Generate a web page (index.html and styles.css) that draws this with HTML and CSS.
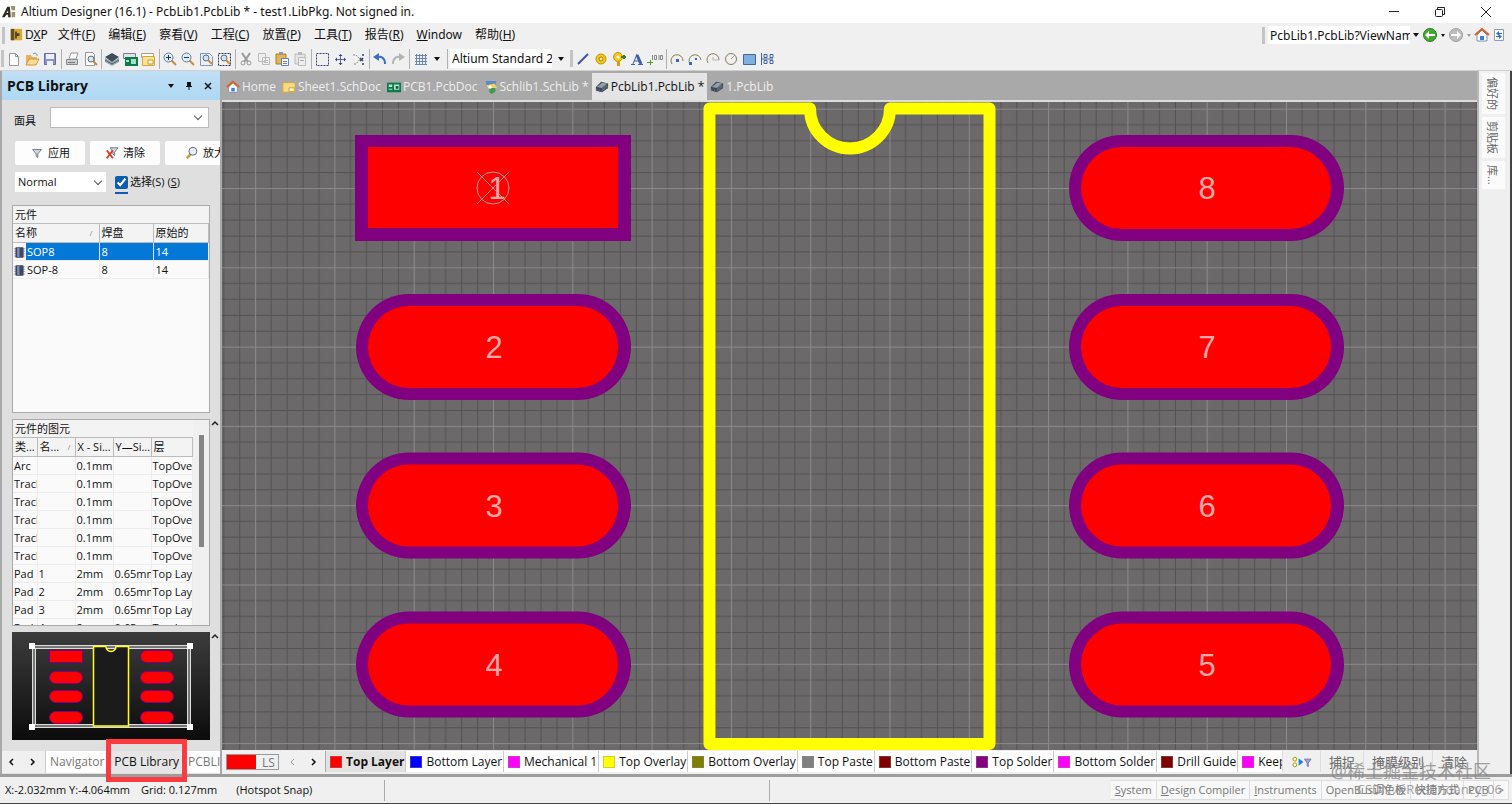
FILE: index.html
```html
<!DOCTYPE html>
<html lang="zh-CN">
<head>
    <title>Altium Designer (16.1)</title>
    <meta charset="UTF-8">
    <meta name="viewport" content="width=device-width, initial-scale=1.0">
    <link rel="stylesheet" href="styles.css">
</head>

<body>
    <!-- shared icons -->
    <svg class="defs" width="0" height="0">
        <symbol id="i-zoom" viewBox="0 0 16 16"><path d="M9 9l5 5" stroke="#c98a3a" stroke-width="2"/><circle cx="6.500" cy="6.500" r="4.500" fill="#dcecf8" stroke="#6c7c8c"/></symbol>
        <symbol id="i-chip" viewBox="0 0 16 16"><path d="M1 8l6-6 8 2v5l-7 5-7-2z" fill="#3d4751"/><path d="M2 8l6-5 6 1-6 5z" fill="#8e9fb0"/><path d="M2 10v3M5 11v3M8 11v3M11 9v3M14 7v3" stroke="#66717d"/><path d="M8 9l6-5v4l-6 5z" fill="#59656f"/></symbol>
        <symbol id="i-board" viewBox="0 0 16 16"><path d="M0 3h16v11H0z" fill="#0b7a4d"/><path d="M2 5h4v3H2zM2 10h4v1H2zM8 5h6v6H8z" fill="#b9e2cd"/><path d="M10 7h3v3h-3z" fill="#075536"/></symbol>
        <symbol id="i-sheet" viewBox="0 0 16 16"><path d="M1 3h14v11H1z" fill="#f6dc7c" stroke="#d0a640"/><path d="M8 9h6v4H8z" fill="#fffbe6" stroke="#c89c30"/></symbol>
        <symbol id="i-home" viewBox="0 0 16 16"><path d="M3 8v6h10V8L8 3z" fill="#fff" stroke="#8290a8"/><path d="M1 8l7-6 7 6" fill="none" stroke="#d9602a" stroke-width="2"/><path d="M6 9h4v4H6z" fill="#3d7fd6"/></symbol>
        <symbol id="i-funnel" viewBox="0 0 16 16"><path d="M3 4h10l-4 5v4l-2-1V9z" fill="#cfd6dd" stroke="#65717d"/></symbol>
        <symbol id="i-part" viewBox="0 0 16 16"><path d="M1 4h14M1 7h14M1 10h14M1 13h14" stroke="#8d93a6"/><rect x="3" y="2" width="10" height="13" rx="1" fill="#3e4763"/><path d="M5 3h3v11H5z" fill="#7f8bb0"/></symbol>
    </svg>

    <header class="titlebar">
        <svg class="icon" viewBox="0 0 16 16"><path d="M0 14L6 2h3l1 12H7v-3H5l-2 3z" fill="#2d2b22"/><path d="M10 1h5v5h-4zM11 8h4v6h-4z" fill="#9a9468"/><path d="M5 9l2-3v3z" fill="#fff"/></svg>
        <h1>Altium Designer (16.1) - PcbLib1.PcbLib * - test1.LibPkg. Not signed in.</h1>
        <div class="window-buttons">
            <button aria-label="Minimize"><svg class="icon" viewBox="0 0 16 16"><path d="M3 7.500h10" stroke="#222"/></svg></button>
            <button aria-label="Restore"><svg class="icon" viewBox="0 0 16 16"><rect x="3.500" y="5.500" width="7" height="7" rx="1" fill="none" stroke="#222"/><path d="M5.500 5V3.500h7v7H11" fill="none" stroke="#222"/></svg></button>
            <button aria-label="Close"><svg class="icon" viewBox="0 0 16 16"><path d="M3 3l10 10M13 3L3 13" stroke="#222"/></svg></button>
        </div>
    </header>

    <nav class="menubar">
        <span class="grip"></span>
        <button class="dxp"><svg class="icon" viewBox="0 0 16 16"><path d="M2 1h13v13H2z" fill="#d9aa32"/><path d="M2 1h4v13H2z" fill="#635023"/><path d="M7 4h2v8H7zM9 6h3v3H9z" fill="#4a4226"/></svg><span>D<u>X</u>P</span></button>
        <button>文件(<u>F</u>)</button>
        <button>编辑(<u>E</u>)</button>
        <button>察看(<u>V</u>)</button>
        <button>工程(<u>C</u>)</button>
        <button>放置(<u>P</u>)</button>
        <button>工具(<u>T</u>)</button>
        <button>报告(<u>R</u>)</button>
        <button><u>W</u>indow</button>
        <button>帮助(<u>H</u>)</button>
        <div class="address">
            <span class="grip"></span>
            <input type="text" value="PcbLib1.PcbLib?ViewName=Main" aria-label="Address">
            <i class="caret"></i>
            <svg class="icon" viewBox="0 0 16 16"><circle cx="8" cy="8" r="6.500" fill="#43a832" stroke="#2c7a21"/><path d="M3 8l4-4v3h6v2H7v3z" fill="#fff"/></svg>
            <i class="caret small"></i>
            <svg class="icon" viewBox="0 0 16 16"><circle cx="8" cy="8" r="6.500" fill="#bdbdbd" stroke="#a0a0a0"/><path d="M13 8L9 4v3H3v2h6v3z" fill="#fff"/></svg>
            <i class="caret small off"></i>
            <svg class="icon"><use href="#i-home"/></svg>
            <svg class="icon" viewBox="0 0 16 16"><path d="M3.500 2.500h9v11h-9z" fill="#fff" stroke="#8b9cb8"/><path d="M7 6.500h4M5 9.500h4" stroke="#2c74cf"/><path d="M8 4v5L5 6.500zM8 7v5l3-2.500z" fill="#2c74cf"/></svg>
        </div>
    </nav>

    <div class="toolbar">
        <span class="grip"></span>
        <button aria-label="New"><svg class="icon" viewBox="0 0 16 16"><path d="M3.500 2.500h6l3 3v9h-9z" fill="#fff" stroke="#9a9a9a"/><path d="M9.500 2.500v3h3" fill="none" stroke="#9a9a9a"/></svg></button>
        <button aria-label="Open"><svg class="icon" viewBox="0 0 16 16"><path d="M2 4h5l1 2h5v7H2z" fill="#e8b458"/><path d="M2 14l3-6h10l-3 6z" fill="#fbdc94" stroke="#cf9640"/><path d="M9 3c3-2 4 0 4 2" fill="none" stroke="#6d93c5"/></svg></button>
        <button aria-label="Save"><svg class="icon" viewBox="0 0 16 16"><path d="M2.500 2.500h11v11h-11z" fill="#8d93c9" stroke="#666ba5"/><path d="M4 3h8v5H4zM5 10h6v4H5z" fill="#eceef8"/></svg></button>
        <span class="sep"></span>
        <button aria-label="Print"><svg class="icon" viewBox="0 0 16 16"><path d="M2.500 8.500h11v5h-11z" fill="#c9ccd0" stroke="#888"/><path d="M5 8l2-6h7l-2 6z" fill="#fff" stroke="#999"/><path d="M4 11.500h7" stroke="#777"/></svg></button>
        <button aria-label="Preview"><svg class="icon" viewBox="0 0 16 16"><path d="M3.500 1.500h7l2 2v11h-9z" fill="#fff" stroke="#999"/><circle cx="9" cy="8" r="3" fill="#d5e8f5" stroke="#667"/><path d="M11 10l4 4" stroke="#c98a3a" stroke-width="2"/></svg></button>
        <span class="sep"></span>
        <button aria-label="Devices"><svg class="icon" viewBox="0 0 16 16"><path d="M1 7v4l7 4 7-4V7l-7 4z" fill="#9aa9b4"/><path d="M1 9l7 4 7-4" fill="none" stroke="#4d5c68"/><path d="M1 6l7-4 7 4-7 5z" fill="#3d4e5b"/></svg></button>
        <button aria-label="PCB"><svg class="icon" viewBox="0 0 16 16"><path d="M1.500 2.500h12v5h-12z" fill="#dce7e2" stroke="#879"/><path d="M3 6h13v9H3z" fill="#0b7a4d"/><path d="M9 8h5v5H9zM4 9h3v2H4z" fill="#aedcc6"/></svg></button>
        <button aria-label="Sheet"><svg class="icon" viewBox="0 0 16 16"><path d="M1.500 2.500h12v4h-12z" fill="#fff" stroke="#a5a08a"/><path d="M2.500 5.500h12v9h-12z" fill="#fae391" stroke="#d0a640"/><path d="M8 9h5v4H8z" fill="#fffbe6" stroke="#c89c30"/></svg></button>
        <span class="sep"></span>
        <button aria-label="Zoom in"><svg class="icon" viewBox="0 0 16 16"><use href="#i-zoom"/><path d="M4 6.500h5M6.500 4v5" stroke="#234"/></svg></button>
        <button aria-label="Zoom out"><svg class="icon" viewBox="0 0 16 16"><use href="#i-zoom"/><path d="M4 6.500h5" stroke="#234"/></svg></button>
        <button aria-label="Fit document"><svg class="icon" viewBox="0 0 16 16"><path d="M2.500 2.500h9l3 3v9h-12z" fill="#e7f0fb" stroke="#8296b8"/><circle cx="8" cy="7" r="3" fill="#cfe3f5" stroke="#5d6f85"/><path d="M10 9l4 4" stroke="#c98a3a" stroke-width="2"/></svg></button>
        <button aria-label="Zoom area"><svg class="icon" viewBox="0 0 16 16"><path d="M2.500 2.500h12v12h-12z" fill="none" stroke="#26355e" stroke-dasharray="2 1"/><circle cx="8" cy="7" r="3" fill="#cfe3f5" stroke="#5d6f85"/><path d="M10 9l4 4" stroke="#c98a3a" stroke-width="2"/></svg></button>
        <span class="sep"></span>
        <button aria-label="Cut"><svg class="icon" viewBox="0 0 16 16"><path d="M4 2l6 9M12 2L6 11" stroke="#999" stroke-width="2"/><circle cx="5" cy="12" r="2" fill="none" stroke="#999"/><circle cx="11" cy="12" r="2" fill="none" stroke="#999"/></svg></button>
        <button aria-label="Copy"><svg class="icon" viewBox="0 0 16 16"><path d="M2.500 2.500h7v8h-7zM6.500 6.500h7v7h-7z" fill="#eee" stroke="#bbb"/><path d="M8 9.500h4M8 11.500h4" stroke="#bbb"/></svg></button>
        <button aria-label="Paste"><svg class="icon" viewBox="0 0 16 16"><path d="M2 3h10v10H2z" fill="#e2b64e" stroke="#a8802c"/><path d="M5 1h4v3H5z" fill="#999"/><path d="M7.500 7.500h7v7h-7z" fill="#fff" stroke="#5f83bd"/><path d="M9 10.500h4M9 12.500h4" stroke="#5f83bd"/></svg></button>
        <button aria-label="Rubber stamp"><svg class="icon" viewBox="0 0 16 16"><path d="M3 3h10v10H3z" fill="#e4e4e4" stroke="#bbb"/><path d="M6 1h4v3H6z" fill="#bbb"/><path d="M6.500 6.500h7v8h-7z" fill="#eee" stroke="#bbb"/><path d="M8 9.500h4" stroke="#aaa"/></svg></button>
        <span class="sep"></span>
        <button aria-label="Select"><svg class="icon" viewBox="0 0 16 16"><path d="M2.500 2.500h12v12h-12z" fill="none" stroke="#34407c" stroke-dasharray="2 1"/></svg></button>
        <button aria-label="Move"><svg class="icon" viewBox="0 0 16 16"><path d="M8.500 4v10M4 8.500h9" stroke="#5a649a"/><path d="M8.500 3l2 2h-4zM8.500 14l2-2h-4zM3 8.500l2-2v4zM14 8.500l-2-2v4z" fill="#34407c"/></svg></button>
        <button aria-label="Deselect"><svg class="icon" viewBox="0 0 16 16"><path d="M3 4h3l4 4-4 5H3" fill="none" stroke="#888" stroke-dasharray="2 1"/><path d="M10 7l3 3M13 7l-3 3M13 3v2M13 12v2" stroke="#34407c" stroke-width="1.500"/></svg></button>
        <span class="sep"></span>
        <button aria-label="Undo"><svg class="icon" viewBox="0 0 16 16"><path d="M4 7c5-3 9 0 9 6" fill="none" stroke="#3f6ec5" stroke-width="2"/><path d="M1 6l6-4v8z" fill="#3f6ec5"/></svg></button>
        <button aria-label="Redo"><svg class="icon" viewBox="0 0 16 16"><path d="M12 7C7 4 3 7 3 13" fill="none" stroke="#b4b4b4" stroke-width="2"/><path d="M15 6L9 2v8z" fill="#b4b4b4"/></svg></button>
        <span class="sep"></span>
        <button aria-label="Grid"><svg class="icon" viewBox="0 0 16 16"><path d="M4.500 3v11M7.500 3v11M10.500 3v11M13.500 3v11M3 4.500h12M3 7.500h12M3 10.500h12M3 13.500h12" stroke="#6b85ad"/></svg></button>
        <i class="caret"></i>
        <span class="sep"></span>
        <input class="view-config" type="text" value="Altium Standard 2D" aria-label="View configuration">
        <i class="caret"></i>
        <span class="grip"></span>
        <button aria-label="Line"><svg class="icon" viewBox="0 0 16 16"><path d="M3 13L13 3" stroke="#3f51a8" stroke-width="2"/></svg></button>
        <button aria-label="Pad"><svg class="icon" viewBox="0 0 16 16"><circle cx="8" cy="8" r="5" fill="#f6c915" stroke="#c58f0c"/><circle cx="8" cy="8" r="2" fill="#fff3b0" stroke="#a97508"/></svg></button>
        <button aria-label="Via"><svg class="icon" viewBox="0 0 16 16"><circle cx="7" cy="6" r="4.500" fill="#f6c915" stroke="#c58f0c"/><circle cx="7" cy="6" r="1.500" fill="#fff"/><path d="M6 10h3v5H6z" fill="#d99d10"/><path d="M10 6h5M13 4v4" stroke="#35851f" stroke-width="2"/></svg></button>
        <button aria-label="String"><svg class="icon" viewBox="0 0 16 16"><path d="M2 13.500h4M9 13.500h5M4 13l4-10M5 10h5" fill="none" stroke="#3b5fb4"/><path d="M8 4l4 9" stroke="#3b5fb4" stroke-width="3"/></svg></button>
        <button aria-label="Coordinate"><svg class="icon" viewBox="0 0 16 16"><path d="M0 11.500h6M3.500 9v5" stroke="#50a030"/><path d="M5.500 4v5M9.500 4.500h-2v4h2zM12 4v5M15.500 4.500h-2v4h2z" fill="none" stroke="#888"/></svg></button>
        <span class="sep"></span>
        <button aria-label="Arc center"><svg class="icon" viewBox="0 0 16 16"><path d="M3 13A6 6 0 1 1 14 10" fill="none" stroke="#8a7b58"/><path d="M7 8h3v3H7z" fill="#3f63c5"/></svg></button>
        <button aria-label="Arc edge"><svg class="icon" viewBox="0 0 16 16"><path d="M3 13A6 6 0 1 1 14 9" fill="none" stroke="#8a7b58"/><path d="M2 11h3v3H2zM8 7h2v2H8z" fill="#3f63c5"/></svg></button>
        <button aria-label="Arc any angle"><svg class="icon" viewBox="0 0 16 16"><path d="M3 12A6 6 0 1 1 14 9" fill="none" stroke="#8a7b58"/><path d="M14 9H8V6" fill="none" stroke="#b5b5c5"/></svg></button>
        <button aria-label="Full circle"><svg class="icon" viewBox="0 0 16 16"><circle cx="8" cy="8" r="5.500" fill="none" stroke="#8a7b58"/><path d="M8 8l4-4" stroke="#99a"/></svg></button>
        <button aria-label="Fill"><svg class="icon" viewBox="0 0 16 16"><path d="M2.500 3.500h12v10h-12z" fill="#7fb0e0" stroke="#46688f"/></svg></button>
        <button aria-label="Paste array"><svg class="icon" viewBox="0 0 16 16"><path d="M2.500 2v12M5 3.500h3v3H5zM5 9.500h3v3H5zM11 3.500h3v3h-3zM11 9.500h3v3h-3zM3 8h11" fill="none" stroke="#4361a0"/></svg></button>
    </div>

    <main class="workspace">
        <aside class="panel">
            <div class="panel-head">
                <h2>PCB Library</h2>
                <i class="caret"></i>
                <svg class="tiny" viewBox="0 0 8 8"><path d="M2 0h4v4h1v1H1V4h1zM3.500 5h1v3h-1z" fill="#111"/></svg>
                <svg class="tiny" viewBox="0 0 8 8"><path d="M1 1l6 6M7 1L1 7" stroke="#111" stroke-width="1.500"/></svg>
            </div>

            <div class="mask-row">
                <label for="mask">面具</label>
                <select id="mask"><option></option></select>
            </div>
            <div class="button-row">
                <button><svg class="icon"><use href="#i-funnel"/></svg>应用</button>
                <button><svg class="icon" viewBox="0 0 16 16"><path d="M6 2h9l-4 5v4L9 9V7z" fill="#cfd6dd" stroke="#65717d"/><path d="M2 5l7 9M9 5l-7 9" stroke="#dc3522" stroke-width="2"/></svg>清除</button>
                <button><svg class="icon" viewBox="0 0 16 16"><path d="M7 9l-5 5" stroke="#c9a03a" stroke-width="3"/><circle cx="9" cy="6" r="4.500" fill="#e6f0f6" stroke="#556"/></svg>放大</button>
            </div>
            <div class="mode-row">
                <select aria-label="Mode"><option>Normal</option></select>
                <label><input type="checkbox" checked>选择(S) (<u>S</u>)</label>
            </div>

            <section class="list parts">
                <table>
                    <caption>元件</caption>
                    <colgroup><col class="name"><col class="pads"><col></colgroup>
                    <thead><tr><th>名称<span class="sort">/</span></th><th>焊盘</th><th>原始的</th></tr></thead>
                    <tbody>
                        <tr class="selected"><td><svg class="icon"><use href="#i-part"/></svg><span>SOP8</span></td><td>8</td><td>14</td></tr>
                        <tr><td><svg class="icon"><use href="#i-part"/></svg><span>SOP-8</span></td><td>8</td><td>14</td></tr>
                    </tbody>
                </table>
            </section>

            <div class="fold">
                <section class="list primitives">
                    <table>
                        <caption>元件的图元</caption>
                        <colgroup><col class="type"><col class="size"><col class="size"><col class="size"><col></colgroup>
                        <thead><tr><th>类...</th><th>名...<span class="sort">/</span></th><th>X - Si...</th><th>Y—Si...</th><th>层</th></tr></thead>
                        <tbody>
                            <tr><td>Arc</td><td></td><td>0.1mm</td><td></td><td>TopOverlay</td></tr>
                            <tr><td>Track</td><td></td><td>0.1mm</td><td></td><td>TopOverlay</td></tr>
                            <tr><td>Track</td><td></td><td>0.1mm</td><td></td><td>TopOverlay</td></tr>
                            <tr><td>Track</td><td></td><td>0.1mm</td><td></td><td>TopOverlay</td></tr>
                            <tr><td>Track</td><td></td><td>0.1mm</td><td></td><td>TopOverlay</td></tr>
                            <tr><td>Track</td><td></td><td>0.1mm</td><td></td><td>TopOverlay</td></tr>
                            <tr><td>Pad</td><td>1</td><td>2mm</td><td>0.65mm</td><td>Top Layer</td></tr>
                            <tr><td>Pad</td><td>2</td><td>2mm</td><td>0.65mm</td><td>Top Layer</td></tr>
                            <tr><td>Pad</td><td>3</td><td>2mm</td><td>0.65mm</td><td>Top Layer</td></tr>
                            <tr><td>Pad</td><td>4</td><td>2mm</td><td>0.65mm</td><td>Top Layer</td></tr>
                        </tbody>
                    </table>
                    <div class="scrollbar"><span></span></div>
                </section>
                <svg class="tiny" viewBox="0 0 8 8"><path d="M1 6l3-3 3 3" fill="none" stroke="#222" stroke-width="1.500"/></svg>
            </div>

            <div class="fold">
                <svg class="preview" viewBox="0 0 198 108">
                    <defs><linearGradient id="dark" x1="0" y1="0" x2="0" y2="1"><stop offset="0" stop-color="#3c3c3c"/><stop offset="1" stop-color="#0c0c0c"/></linearGradient></defs>
                    <rect width="198" height="108" fill="url(#dark)"/>
                    <g fill="none"><rect x="21.500" y="15" width="155" height="79" stroke="#777" stroke-width="3"/><rect x="20.500" y="13.500" width="158" height="82" stroke="#ddd"/><rect x="23.500" y="16.500" width="152" height="76" stroke="#ddd"/></g>
                    <g fill="#f00" stroke="#800080">
                        <rect x="37.500" y="18.500" width="33" height="12"/>
                        <rect x="37.500" y="39.500" width="33" height="12" rx="6"/>
                        <rect x="37.500" y="58.500" width="33" height="12" rx="6"/>
                        <rect x="37.500" y="79.500" width="33" height="12" rx="6"/>
                        <rect x="128.500" y="18.500" width="33" height="12" rx="6"/>
                        <rect x="128.500" y="39.500" width="33" height="12" rx="6"/>
                        <rect x="128.500" y="58.500" width="33" height="12" rx="6"/>
                        <rect x="128.500" y="79.500" width="33" height="12" rx="6"/>
                    </g>
                    <path d="M94 14.500H81.500V94h35V14.500H104a5 5 0 0 1-10 0" fill="#1b1b1b" stroke="#ff2" stroke-width="1.500"/>
                    <path d="M17 11h6v6h-6zM175 11h6v6h-6zM17 92h6v6h-6zM175 92h6v6h-6z" fill="#fff"/>
                </svg>
                <svg class="tiny" viewBox="0 0 8 8"><path d="M1 6l3-3 3 3" fill="none" stroke="#222" stroke-width="1.500"/></svg>
            </div>

            <div class="panel-tabs">
                <button class="step" aria-label="Previous"><svg class="tiny" viewBox="0 0 8 8"><path d="M5 1L2 4l3 3" fill="none" stroke="#111" stroke-width="1.500"/></svg></button>
                <button class="step" aria-label="Next"><svg class="tiny" viewBox="0 0 8 8"><path d="M3 1l3 3-3 3" fill="none" stroke="#111" stroke-width="1.500"/></svg></button>
                <button class="tab">Navigator</button>
                <button class="tab current">PCB Library</button>
                <button class="tab">PCBLIB Filter</button>
            </div>
        </aside>

        <section class="editor">
            <nav class="doc-tabs">
                <a href="#"><svg class="icon"><use href="#i-home"/></svg>Home</a>
                <a href="#"><svg class="icon"><use href="#i-sheet"/></svg>Sheet1.SchDoc</a>
                <a href="#"><svg class="icon"><use href="#i-board"/></svg>PCB1.PcbDoc</a>
                <a href="#"><svg class="icon" viewBox="0 0 16 16"><path d="M2 1h12l-1 5H3z" fill="#5c88c9"/><path d="M3 6l9-2 3 5-9 2z" fill="#f0d155"/><path d="M6 9h7v4l-4 3-3-2z" fill="#3d9a50"/><circle cx="7" cy="8" r="2" fill="#fff"/></svg>Schlib1.SchLib *</a>
                <a href="#" class="current"><svg class="icon"><use href="#i-chip"/></svg>PcbLib1.PcbLib *</a>
                <a href="#"><svg class="icon"><use href="#i-chip"/></svg>1.PcbLib</a>
            </nav>

            <svg class="canvas" viewBox="222 102 1255 648" preserveAspectRatio="xMidYMid slice">
                <defs>
                    <pattern id="grid" x="493" y="188" width="79.300" height="79.300" patternUnits="userSpaceOnUse">
                        <path d="M16 0v80M32 0v80M48 0v80M64 0v80M0 16h80M0 32h80M0 48h80M0 64h80" stroke="#535151" stroke-width="1"/>
                        <path d="M0.500 0v80M0 0.500h80" stroke="#8b8989" stroke-width="1"/>
                    </pattern>
                    <g id="pad">
                        <rect x="-137" y="-53" width="275" height="106" rx="53" fill="#800080"/>
                        <rect x="-125" y="-41" width="250" height="82" rx="41" fill="#f00"/>
                    </g>
                </defs>
                <rect x="222" y="102" width="1255" height="648" fill="#6b6969"/>
                <rect x="222" y="102" width="1255" height="648" fill="url(#grid)"/>

                <!-- pads -->
                <rect x="355" y="135" width="276" height="106" fill="#800080"/>
                <rect x="368" y="147" width="250" height="81" fill="#f00"/>
                <use href="#pad" x="493" y="347"/>
                <use href="#pad" x="493" y="505.500"/>
                <use href="#pad" x="493" y="664.500"/>
                <use href="#pad" x="1206" y="188"/>
                <use href="#pad" x="1206" y="347"/>
                <use href="#pad" x="1206" y="505.500"/>
                <use href="#pad" x="1206" y="664.500"/>
                <g class="pad-number">
                    <text x="497" y="199">1</text>
                    <text x="494" y="358">2</text>
                    <text x="494" y="517">3</text>
                    <text x="494" y="676">4</text>
                    <text x="1207" y="676">5</text>
                    <text x="1207" y="517">6</text>
                    <text x="1207" y="358">7</text>
                    <text x="1207" y="199">8</text>
                </g>
                <g fill="none" stroke="#b9a09a"><circle cx="493" cy="188" r="16"/><path d="M477 172l32 32M509 172l-32 32"/></g>

                <!-- package outline -->
                <path d="M810 108.500H709.500V744H989.500V108.500H890A40 40 0 0 1 810 108.500" fill="none" stroke="#ff0" stroke-width="12" stroke-linecap="round" stroke-linejoin="round"/>
            </svg>

            <div class="layer-bar">
                <button class="layer-set"><i></i>LS</button>
                <button class="step off" aria-label="Previous layer"><svg class="tiny" viewBox="0 0 8 8"><path d="M5 1L2 4l3 3" fill="none" stroke="#999"/></svg></button>
                <button class="step" aria-label="Next layer"><svg class="tiny" viewBox="0 0 8 8"><path d="M3 1l3 3-3 3" fill="none" stroke="#111" stroke-width="1.500"/></svg></button>
                <div class="layers">
                    <button class="current"><i class="red"></i>Top Layer</button>
                    <button><i class="blue"></i>Bottom Layer</button>
                    <button><i class="magenta"></i>Mechanical 1</button>
                    <button><i class="yellow"></i>Top Overlay</button>
                    <button><i class="olive"></i>Bottom Overlay</button>
                    <button><i class="gray"></i>Top Paste</button>
                    <button><i class="maroon"></i>Bottom Paste</button>
                    <button><i class="purple"></i>Top Solder</button>
                    <button><i class="magenta"></i>Bottom Solder</button>
                    <button><i class="maroon"></i>Drill Guide</button>
                    <button><i class="magenta"></i>Keep-Out Layer</button>
                </div>
                <div class="layer-tools">
                    <button class="filter" aria-label="Filter"><svg viewBox="0 0 22 14"><circle cx="4" cy="4" r="2" fill="#ffc" stroke="#a90"/><circle cx="4" cy="10" r="2" fill="#ffc" stroke="#a90"/><path d="M8 3l5 4-5 4z" fill="#1d7fe0"/><path d="M14 4h7l-3 4v4l-1-1V8z" fill="#a9a3dc" stroke="#7770b0"/></svg></button>
                    <button>捕捉</button>
                    <button>掩膜级别</button>
                    <button>清除</button>
                </div>
            </div>
        </section>

        <aside class="side-tabs">
            <button>偏好的</button>
            <button>剪贴板</button>
            <button>库...</button>
        </aside>
    </main>

    <footer class="statusbar">
        <span class="coords">X:-2.032mm Y:-4.064mm</span>
        <span class="grid-size">Grid: 0.127mm</span>
        <span class="snap">(Hotspot Snap)</span>
        <span class="message"></span>
        <div class="status-buttons">
            <button><u>S</u>ystem</button>
            <button><u>D</u>esign Compiler</button>
            <button><u>I</u>nstruments</button>
            <button>OpenBus调色板</button>
            <button>快捷方式</button>
            <button>PCB</button>
            <button>&gt;</button>
        </div>
        <div class="watermark">
            <p class="site">@稀土掘金技术社区</p>
            <p>CSDN @Redundancy_06</p>
        </div>
    </footer>
</body>
</html>
```
FILE: styles.css
```css
* {
    box-sizing: border-box;
}

body {
    margin: 0;
    min-height: 100vh;
    display: flex;
    flex-direction: column;
    background: #f0f0f0;
    color: #111;
    font-family: "Open Sans", "Noto Sans CJK SC", sans-serif;
    font-size: 12px;
    line-height: 16px;
    border-bottom: 1px solid #444;
    overflow: hidden;
}

button, input, select {
    margin: 0;
    padding: 0;
    border: none;
    background: none;
    color: inherit;
    font: inherit;
}

button {
    white-space: nowrap;
}

h1, h2, p {
    margin: 0;
    font-size: inherit;
    font-weight: normal;
}

u {
    text-underline-offset: 1px;
}

.defs {
    position: absolute;
}

.icon {
    display: block;
    flex: none;
    width: 14px;
    height: 14px;
}

.tiny {
    display: block;
    flex: none;
    width: 8px;
    height: 8px;
}

.caret {
    flex: none;
    border: 3px solid transparent;
    border-top: 4px solid #111;
    border-bottom: none;
}

.caret.small {
    border-width: 2px;
    border-top-width: 3px;
}

.caret.off {
    border-top-color: #999;
}

.grip {
    flex: none;
    width: 3px;
    height: 17px;
    background: #c4c4c4;
}

/* title and menus */
.titlebar {
    display: flex;
    align-items: center;
    height: 23px;
    padding: 0 18px 0 2px;
    gap: 5px;
    background: #fff;
    font-family: "Noto Sans", sans-serif;
}

.titlebar h1 {
    flex: 1;
}

.window-buttons {
    display: flex;
    gap: 30px;
}

.window-buttons .icon {
    width: 16px;
    height: 16px;
}

.menubar {
    display: flex;
    align-items: center;
    height: 24px;
    padding: 0 5px 0 2px;
    gap: 13px;
    font-family: "Noto Sans", "Noto Sans CJK SC", sans-serif;
}

.menubar .dxp {
    display: flex;
    align-items: center;
    gap: 2px;
    margin: 0 -3px 0 -9px;
}

.address {
    display: flex;
    align-items: center;
    gap: 1px;
    margin-left: auto;
}

.address input {
    width: 142px;
    height: 18px;
    margin-left: 2px;
    padding-left: 2px;
    background: #fff;
}

.address .icon {
    width: 16px;
    height: 16px;
}

.address .caret {
    margin: 0 2px;
}

.toolbar {
    display: flex;
    align-items: center;
    height: 24px;
    padding-left: 1px;
    gap: 2px;
    border-bottom: 1px solid #d0d0d0;
    font-family: "Noto Sans", sans-serif;
}

.toolbar .icon {
    width: 16px;
    height: 16px;
}

.sep {
    flex: none;
    width: 1px;
    height: 20px;
    margin-left: 1px;
    background: #b0b0b0;
}

.toolbar .caret {
    margin: 0 4px;
}

.view-config {
    width: 102px;
    height: 19px;
    padding-left: 2px;
    background: #fff;
}

/* left panel */
.workspace {
    flex: 1;
    display: flex;
    border-bottom: 3px solid #9d9d9d;
    background: #f0f0f0;
}

.panel {
    z-index: 1;
    flex: none;
    display: flex;
    flex-direction: column;
    width: 222px;
    padding-bottom: 1px;
    border-left: 2px solid #a8a8a8;
    border-right: 2px solid #a8a8a8;
    background: #dfdfdf;
}

.panel-head {
    display: flex;
    align-items: center;
    height: 29px;
    padding: 0 8px 0 5px;
    gap: 11px;
    background: linear-gradient(#c0dff5, #aed8f3);
}

.panel-head h2 {
    flex: 1;
    font-size: 14px;
    font-weight: bold;
}

.mask-row {
    display: flex;
    align-items: center;
    height: 21px;
    margin: 7px 11px 0 12px;
    gap: 14px;
}

.mask-row label {
    font-size: 11px;
    padding-top: 6px;
}

.mask-row select {
    flex: 1;
    height: 21px;
    border: 1px solid #bbb;
}

select {
    appearance: none;
    background: #fff;
}

.mask-row, .mode-row {
    position: relative;
}

/* chevrons of the drop-downs */
.mask-row::after, .mode-row::after {
    content: "";
    position: absolute;
    right: 8px;
    top: 6px;
    width: 5px;
    height: 5px;
    border: solid #555;
    border-width: 0 1px 1px 0;
    transform: rotate(45deg);
}

.mode-row::after {
    right: auto;
    left: 80px;
}

.button-row {
    display: flex;
    flex: none;
    margin: 13px 0 0 13px;
    gap: 5px;
    overflow: hidden;
}

.button-row button {
    display: flex;
    flex: none;
    align-items: center;
    justify-content: center;
    width: 70px;
    height: 24px;
    gap: 4px;
    border-radius: 2px;
    background: #fdfdfd;
    font-size: 11px;
}

.button-row button:last-child {
    width: 80px;
}

.mode-row {
    display: flex;
    align-items: center;
    margin: 7px 0 0 13px;
    gap: 9px;
}

.mode-row select {
    width: 91px;
    height: 20px;
    padding-left: 3px;
    font-size: 11px;
}

.mode-row label {
    display: flex;
    align-items: center;
    font-size: 11px;
    white-space: pre;
}

.mode-row input {
    width: 13px;
    height: 13px;
    margin-right: 2px;
    accent-color: #0a5cb5;
    box-shadow: 0 3px #dfdfdf, 0 5px #0a5cb5;
}

.list {
    overflow: hidden;
    border: 1px solid #aaa;
    background: #fafafa;
    font-size: 11px;
}

.list table {
    width: 100%;
    border-collapse: collapse;
    table-layout: fixed;
}

.list caption {
    height: 18px;
    padding-left: 2px;
    border-bottom: 1px solid #bbb;
    background: #f3f3f3;
    line-height: 18px;
    text-align: left;
}

.list th, .list td {
    height: 18px;
    padding: 0 0 0 2px;
    overflow: hidden;
    border-right: 1px solid #ececec;
    font-weight: normal;
    line-height: 17px;
    text-align: left;
    white-space: nowrap;
}

.list th {
    border-right-color: #bbb;
    border-bottom: 1px solid #bbb;
    background: #f3f3f3;
}

.list td {
    border-bottom: 1px solid #ececec;
}

.sort {
    float: right;
    padding-right: 6px;
    color: #888;
    font-size: 8px;
}

.parts {
    height: 208px;
    margin: 13px 10px 0 10px;
}

.parts .name {
    width: 86px;
}

.parts .pads {
    width: 54px;
}

.parts td:first-child {
    padding-left: 0;
}

.parts td .icon {
    float: left;
    width: 13px;
    margin-top: 2px;
}

.parts td span {
    display: block;
    margin-left: 13px;
    padding-left: 1px;
}

.selected td:not(:first-child), .selected span {
    background: #0478d7;
    color: #fff;
}

.fold {
    display: flex;
    margin: 6px 0 0 10px;
    gap: 1px;
}

.primitives {
    display: flex;
    flex: none;
    width: 198px;
    height: 207px;
}

.primitives table {
    width: 180px;
}

.primitives .type {
    width: 24px;
}

.primitives .size {
    width: 38px;
}

.primitives td {
    padding-left: 1px;
}

.primitives .sort {
    padding-right: 4px;
}

.scrollbar {
    flex: 1;
    padding: 15px 0 0 6px;
    background: #f0f0f0;
}

.scrollbar span {
    display: block;
    width: 5px;
    height: 112px;
    background: #858585;
}

.preview {
    display: block;
    flex: none;
    width: 198px;
    height: 108px;
}

.panel-tabs {
    display: flex;
    flex: none;
    height: 22px;
    margin-top: auto;
    overflow-x: clip;
    background: #f0f0f0;
}

.step {
    display: flex;
    flex: none;
    align-items: center;
    justify-content: center;
    width: 20px;
}

.panel-tabs .tab {
    flex: none;
    padding: 0 3px;
    border-left: 1px solid #ccc;
    background: #fff;
    color: #777;
}

.panel-tabs .step + .tab {
    margin-left: 3px;
    padding-left: 4px;
}

.panel-tabs .current {
    position: relative;
    margin: 0 2px 0 4px;
    padding: 0 3px;
    border: none;
    background: #e6e6e6;
    color: #111;
}

/* red frame round the open panel's tab */
.panel-tabs .current::after {
    content: "";
    position: absolute;
    inset: -12px -5px -9px -5px;
    border: 5px solid #fb3b3f;
}

/* editor */
.editor {
    flex: 1;
    display: flex;
    flex-direction: column;
    min-width: 0;
}

.doc-tabs {
    display: flex;
    flex: none;
    height: 31px;
    padding: 2px 0 0 1px;
    border-bottom: 2px solid #ddd;
    background: #a9a9a9;
}

.doc-tabs a {
    display: flex;
    align-items: center;
    padding: 0 3px;
    gap: 2px;
    color: #eee;
    text-decoration: none;
}

.doc-tabs .current {
    background: #e4e4e4;
    color: #111;
}

.canvas {
    display: block;
    flex: 1;
    width: 100%;
    min-height: 0;
}

.pad-number {
    fill: #ffa8a8;
    font-family: "Liberation Sans", sans-serif;
    font-size: 31px;
    text-anchor: middle;
}

.layer-bar {
    display: flex;
    flex: none;
    height: 24px;
    padding: 1px 0 2px 4px;
}

.layer-set {
    display: flex;
    align-self: center;
    width: 53px;
    height: 16px;
    margin-right: 4px;
    border: 1px solid #999;
    gap: 6px;
    color: #777;
}

.layer-set i {
    width: 29px;
    height: 14px;
    background: #f00;
}

.layers {
    display: flex;
    flex: 1;
    min-width: 0;
    margin-left: 2px;
    overflow: hidden;
}

.layers button {
    display: flex;
    flex: none;
    align-items: center;
    padding: 0 1px 0 4px;
    gap: 4px;
    border-right: 1px solid #ccc;
    background: #fff;
}

.layers .current {
    border-left: 1px solid #aaa;
    background: #e2e2e2;
    font-weight: bold;
}

.layers i {
    width: 12px;
    height: 12px;
    border: 1px solid #8886;
}

.red { background: #f00; }
.blue { background: #00f; }
.magenta { background: #f0f; }
.yellow { background: #ff0; }
.olive { background: #808000; }
.gray { background: #808080; }
.maroon { background: #800000; }
.purple { background: #800080; }

.layer-tools {
    display: flex;
    flex: none;
    padding-right: 2px;
    color: #666;
    font-size: 13px;
}

.layer-tools button {
    padding: 0 8px;
    border-left: 1px solid #ddd;
}

.layer-tools .filter {
    display: flex;
    align-items: center;
    width: 38px;
}

.filter svg {
    width: 22px;
    height: 14px;
}

.side-tabs {
    flex: none;
    width: 35px;
    padding: 2px 5px 0 3px;
    border-left: 2px solid #b8b8b8;
    border-right: 2px solid #444;
    background: #efefef;
}

.side-tabs button {
    display: block;
    width: 23px;
    margin-bottom: 3px;
    padding: 4px 3px 4px 0;
    background: #fbfbfb;
    color: #666;
    font-size: 11px;
    writing-mode: vertical-rl;
    text-orientation: sideways;
}

/* status bar */
.statusbar {
    position: relative;
    display: flex;
    align-items: center;
    flex: none;
    height: 26px;
    padding: 0 3px 0 5px;
    font-size: 11px;
}

.grid-size {
    margin-left: 11px;
}

.snap {
    width: 148px;
    margin-left: 19px;
}

.message {
    width: 386px;
    height: 21px;
    border: solid #aaa;
    border-width: 0 1px;
}

.status-buttons {
    display: flex;
    margin-left: auto;
    color: #777;
}

.status-buttons button {
    height: 20px;
    padding: 0 4px;
    border: 1px solid #ddd;
    border-left-width: 0;
    background: #f8f8f8;
}

.watermark {
    position: absolute;
    right: 10px;
    top: -15px;
    color: #888c;
    font-size: 13px;
    line-height: 18px;
    text-align: right;
    pointer-events: none;
}

.watermark .site {
    padding-right: 11px;
    font-size: 18px;
}
```
